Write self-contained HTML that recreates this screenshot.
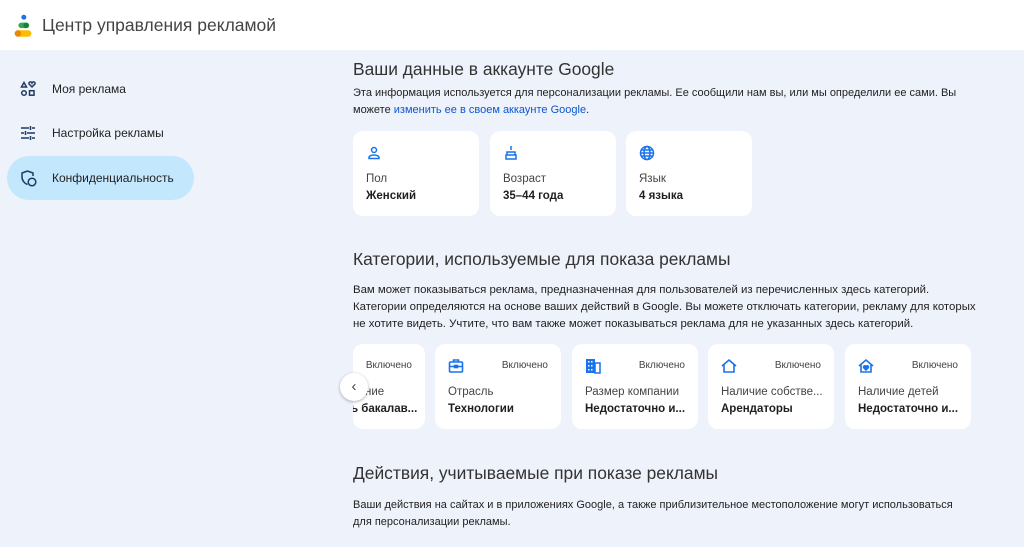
<!DOCTYPE html><html><head><meta charset="utf-8"><style>
body{margin:0;width:1024px;height:547px;overflow:hidden;background:#eef2fb;font-family:"Liberation Sans",sans-serif;color:#1f1f1f;position:relative}
.hdr{position:absolute;left:0;top:0;width:1024px;height:50px;background:#fff}
.hdr .t{position:absolute;left:42px;top:15px;font-size:17.5px;color:#444}
.nav{position:absolute;left:20px;font-size:12px;color:#1f1f1f}
.sel{position:absolute;left:7px;top:156px;width:187px;height:44px;border-radius:22px;background:#c3e7fd}
.ic{position:absolute;left:20px}
h2{position:absolute;left:353px;margin:0;font-weight:normal;font-size:17.4px;color:#333}
p{position:absolute;left:353px;margin:0;font-size:11px;line-height:16.8px;color:#1f1f1f;width:618px}
a{color:#0b57d0;text-decoration:none}
.c{position:absolute;background:#fff;border-radius:10px;width:126px;height:85px;overflow:hidden}
.c .l{position:absolute;left:13px;top:42px;font-size:11.5px;color:#444;white-space:nowrap}
.c .v{position:absolute;left:13px;top:59px;font-size:11.5px;font-weight:bold;white-space:nowrap}
.c .on{position:absolute;right:13px;top:16px;font-size:10px;color:#444}
.c svg{position:absolute;left:13px;top:14px}
</style></head><body>
<div class="hdr">
<svg style="position:absolute;left:13px;top:14px" width="26" height="26" viewBox="0 0 24 24"><circle cx="10" cy="3" r="2.3" fill="#1a73e8"/><rect x="5" y="8" width="10" height="5" rx="2.5" fill="#34a853"/><circle cx="12" cy="10.5" r="2.5" fill="#188038"/><rect x="2" y="15" width="15" height="6" rx="3" fill="#fbbc04"/><circle cx="4.5" cy="18" r="3" style="fill:#ea8600"/></svg>
<div class="t">Центр управления рекламой</div></div>
<svg class="ic" style="top:81px" width="16" height="16" viewBox="0 0 16 16" fill="none" stroke="#1f3a60" stroke-width="1.5"><path d="M4 1.5L6.5 6H1.5Z"/><path d="M12 6l-3-3a1.5 1.5 0 013-1 1.5 1.5 0 013 1z"/><circle cx="4" cy="12" r="2.3"/><rect x="9.5" y="9.7" width="4.5" height="4.5"/></svg>
<div class="nav" style="left:52px;top:82px">Моя реклама</div>
<svg class="ic" style="top:125px" width="16" height="16" viewBox="0 0 16 16" stroke="#1f3a60" stroke-width="1.5"><path d="M1 3h8M12 3h3M10.5 1v4M1 8h3M7 8h8M5.5 6v4M1 13h8M12 13h3M10.5 11v4"/></svg>
<div class="nav" style="left:52px;top:126px">Настройка рекламы</div>
<div class="sel"></div>
<svg class="ic" style="top:170px" width="17" height="17" viewBox="0 0 17 17" fill="none" stroke="#1f3a60" stroke-width="1.5"><path d="M7.5 1L2 3v4c0 3.5 2.5 6.5 5.5 7.5"/><path d="M7.5 1L13 3v3"/><circle cx="12" cy="12" r="3.8"/></svg>
<div class="nav" style="left:52px;top:171px">Конфиденциальность</div>

<h2 style="top:59px">Ваши данные в аккаунте Google</h2>
<p style="top:85px">Эта информация используется для персонализации рекламы. Ее сообщили нам вы, или мы определили ее сами. Вы можете <a>изменить ее в своем аккаунте Google</a>.</p>
<div class="c" style="left:353px;top:131px"><svg width="16" height="16" viewBox="0 0 16 16" fill="none" stroke="#1a73e8" stroke-width="1.5"><circle cx="8" cy="5" r="2.5"/><path d="M3 13.5v-1c0-1.5 2.5-2.5 5-2.5s5 1 5 2.5v1z"/></svg><div class="l">Пол</div><div class="v">Женский</div></div>
<div class="c" style="left:490px;top:131px"><svg width="16" height="16" viewBox="0 0 16 16" fill="none" stroke="#1a73e8" stroke-width="1.5"><path d="M8 1v4M4 7h8v3H4zM3 10h10v4H3z"/></svg><div class="l">Возраст</div><div class="v">35–44 года</div></div>
<div class="c" style="left:626px;top:131px"><svg width="16" height="16" viewBox="0 0 16 16" fill="none" stroke="#1a73e8" stroke-width="1.5"><circle cx="8" cy="8" r="6.5"/><ellipse cx="8" cy="8" rx="3" ry="6.5"/><path d="M1.5 8h13M2.5 5h11M2.5 11h11"/></svg><div class="l">Язык</div><div class="v">4 языка</div></div>

<h2 style="top:249px">Категории, используемые для показа рекламы</h2>
<p style="top:282px;white-space:nowrap;font-size:11.4px">Вам может показываться реклама, предназначенная для пользователей из перечисленных здесь категорий.<br>Категории определяются на основе ваших действий в Google. Вы можете отключать категории, рекламу для которых<br>не хотите видеть. Учтите, что вам также может показываться реклама для не указанных здесь категорий.</p>
<div class="c" style="left:353px;top:344px;width:72px"><div class="on">Включено</div><div class="l" style="left:12px">ние</div><div class="v" style="left:-2px">ь бакалав...</div></div>
<div class="c" style="left:435px;top:344px"><svg width="16" height="16" viewBox="0 0 16 16" fill="none" stroke="#1a73e8" stroke-width="1.6"><rect x="1.5" y="4" width="13" height="10" rx="1"/><path d="M5.5 4V2h5v2M1.5 8.5h13"/><rect x="6.5" y="7.5" width="3" height="2" fill="#1a73e8"/></svg><div class="on">Включено</div><div class="l">Отрасль</div><div class="v">Технологии</div></div>
<div class="c" style="left:572px;top:344px"><svg width="16" height="16" viewBox="0 0 16 16"><rect x="1" y="1" width="9" height="14" fill="#1a73e8"/><rect x="10" y="5" width="5" height="10" fill="none" stroke="#1a73e8" stroke-width="1.5"/><g fill="#fff"><rect x="3" y="3" width="1.5" height="1.5"/><rect x="6" y="3" width="1.5" height="1.5"/><rect x="3" y="7" width="1.5" height="1.5"/><rect x="6" y="7" width="1.5" height="1.5"/><rect x="3" y="11" width="1.5" height="1.5"/><rect x="6" y="11" width="1.5" height="1.5"/></g></svg><div class="on">Включено</div><div class="l">Размер компании</div><div class="v">Недостаточно и...</div></div>
<div class="c" style="left:708px;top:344px"><svg width="16" height="16" viewBox="0 0 16 16" fill="none" stroke="#1a73e8" stroke-width="1.6"><path d="M1 8L8 2l7 6M3 6.5V14h10V6.5"/></svg><div class="on">Включено</div><div class="l">Наличие собстве...</div><div class="v">Арендаторы</div></div>
<div class="c" style="left:845px;top:344px"><svg width="16" height="16" viewBox="0 0 16 16" fill="none" stroke="#1a73e8" stroke-width="1.6"><path d="M1 8L8 2l7 6M3 6.5V14h10V6.5"/><path d="M8 12l-2.3-2.3a1.2 1.2 0 012.3-1.2 1.2 1.2 0 012.3 1.2z" fill="#1a73e8"/></svg><div class="on">Включено</div><div class="l">Наличие детей</div><div class="v">Недостаточно и...</div></div>
<div style="position:absolute;left:340px;top:373px;width:28px;height:28px;border-radius:50%;background:#fff;box-shadow:0 1px 3px rgba(0,0,0,.3);text-align:center;line-height:27px;font-size:15px;color:#444">‹</div>

<h2 style="top:463px">Действия, учитываемые при показе рекламы</h2>
<p style="top:497px">Ваши действия на сайтах и в приложениях Google, а также приблизительное местоположение могут использоваться для персонализации рекламы.</p>
</body></html>
